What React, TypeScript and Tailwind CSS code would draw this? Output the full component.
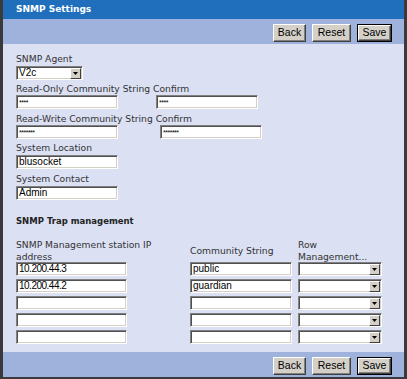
import React from 'react';

const label = "font-['DejaVu_Sans',sans-serif] text-[9.2px] leading-[12px] text-[#333] whitespace-nowrap";
const field =
  "h-[14px] bg-white border border-t-[#808080] border-l-[#808080] border-b-white border-r-white shadow-[inset_1px_1px_0_#505050,inset_-1px_-1px_0_#d4d0c8] px-[2px] font-['Liberation_Sans',sans-serif] text-[10px] leading-[12px] text-black outline-none";

function Btn({ children, w, def }: { children: React.ReactNode; w: string; def?: boolean }) {
  return (
    <div className={`${w} h-[18px] ${def ? 'border border-black' : ''}`}>
      <div className="flex h-full w-full items-center justify-center border border-t-white border-l-white border-b-[#404040] border-r-[#404040] bg-[#d4d0c8] shadow-[inset_-1px_-1px_0_#808080] font-['Liberation_Sans',sans-serif] text-[10.5px] text-black">
        {children}
      </div>
    </div>
  );
}

function Toolbar() {
  return (
    <div className="flex h-[25px] items-start justify-end gap-[6px] bg-[#9eb2db] pr-[12px] pt-[5px]">
      <Btn w="w-[33px]">Back</Btn>
      <Btn w="w-[39px]">Reset</Btn>
      <Btn w="w-[35px]" def>
        Save
      </Btn>
    </div>
  );
}

function Field({ value = '', w, className = '', dots }: { value?: string; w: string; className?: string; dots?: boolean }) {
  return (
    <div className={`${field} ${w} ${className} flex items-center overflow-hidden`}>
      {dots ? <span className="text-[7px] leading-none tracking-[-0.5px]">{value}</span> : value}
    </div>
  );
}

function Select({ value = '', w, className = '' }: { value?: string; w: string; className?: string }) {
  return (
    <div className={`${field} ${w} ${className} flex items-center justify-between !px-0`}>
      <span className="pl-[2px]">{value}</span>
      <div className="mr-[1px] flex h-[11px] w-[11px] items-center justify-center border border-t-white border-l-white border-b-[#404040] border-r-[#404040] bg-[#d4d0c8]">
        <svg width="5" height="3" viewBox="0 0 5 3">
          <path d="M0 0h5L2.5 3z" fill="#000" />
        </svg>
      </div>
    </div>
  );
}

const rows = [
  ['10.200.44.3', 'public'],
  ['10.200.44.2', 'guardian'],
  ['', ''],
  ['', ''],
  ['', ''],
];

export default function App() {
  return (
    <div className="flex h-[379px] w-[407px] flex-col border-x-[3px] border-b-2 border-[#3a3a3a] bg-[#dbe0f3]">
      <div className="flex h-[19px] items-center bg-[#1f6fbd] pl-[13px] font-['DejaVu_Sans',sans-serif] text-[9px] font-bold text-white">
        SNMP Settings
      </div>
      <Toolbar />

      <div className="flex-1 pl-[13px] pt-[9px]">
        <div className={label}>SNMP Agent</div>
        <Select value="V2c" w="w-[67px]" className="mt-[1px]" />

        <div className={`${label} mt-[3px]`}>Read-Only Community String Confirm</div>
        <div className="flex">
          <Field w="w-[102px]" value="****" dots />
          <Field w="w-[102px]" className="ml-[38px]" value="****" dots />
        </div>

        <div className={`${label} mt-[4px]`}>Read-Write Community String Confirm</div>
        <div className="flex">
          <Field w="w-[102px]" value="*******" dots />
          <Field w="w-[102px]" className="ml-[42px]" value="*******" dots />
        </div>

        <div className={`${label} mt-[3px]`}>System Location</div>
        <Field w="w-[102px]" className="mt-[1px]" value="blusocket" />

        <div className={`${label} mt-[4px]`}>System Contact</div>
        <Field w="w-[102px]" className="mt-[1px]" value="Admin" />

        <div className="mt-[15px] font-['DejaVu_Sans',sans-serif] text-[8.5px] font-bold leading-[12px] text-[#222]">
          SNMP Trap management
        </div>

        <div className="mt-[12px] flex">
          <div className={`${label} w-[111px]`}>
            SNMP Management station IP
            <br />
            address
          </div>
          <div className={`${label} ml-[63px] w-[102px] self-center`}>Community String</div>
          <div className={`${label} ml-[6px] w-[84px]`}>
            Row
            <br />
            Management...
          </div>
        </div>

        <div className="-mt-[1px] flex flex-col gap-[3px]">
          {rows.map(([ip, cs], i) => (
            <div key={i} className="flex">
              <Field w="w-[111px]" value={ip} className="tracking-[-0.5px]" />
              <Field w="w-[102px]" className="ml-[63px]" value={cs} />
              <Select w="w-[84px]" className="ml-[6px]" />
            </div>
          ))}
        </div>
      </div>

      <Toolbar />
    </div>
  );
}
